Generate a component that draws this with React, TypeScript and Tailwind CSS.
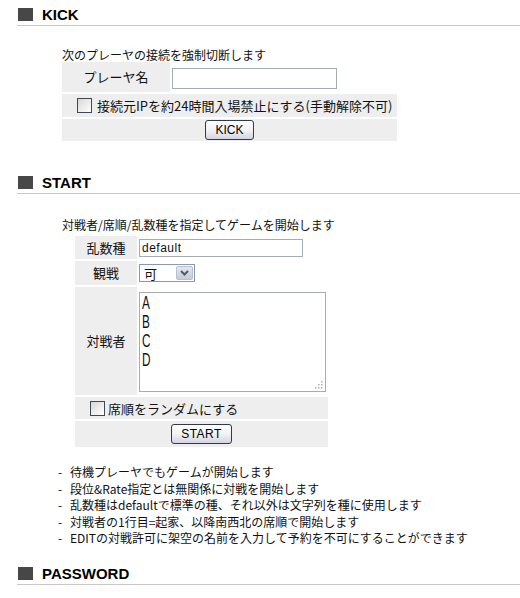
import React from 'react';

const jp = "font-['Noto_Sans_CJK_JP','Liberation_Sans',sans-serif]";

function SectionHeader({ title, className }: { title: string; className?: string }) {
  return (
    <div className={`ml-[17px] flex h-[22px] items-center border-b border-[#c8c8c8] ${className ?? ''}`}>
      <span className="ml-[1px] h-[13px] w-[15px] bg-[#474747]" />
      <span className="ml-[9px] font-['Liberation_Sans',sans-serif] text-[15px] font-bold leading-none text-black">
        {title}
      </span>
    </div>
  );
}

function Checkbox() {
  return (
    <span className="block h-[15px] w-[15px] shrink-0 border border-[#3a4a5e] bg-gradient-to-br from-[#d8d8d2] to-white" />
  );
}

function XpButton({ label, className }: { label: string; className?: string }) {
  return (
    <button
      className={`flex h-[20px] items-center justify-center rounded-[3px] border border-[#2f3a4a] bg-gradient-to-b from-white via-[#f2f2f6] to-[#d4d4e2] font-['Liberation_Sans',sans-serif] text-[12px] leading-none text-black ${className ?? ''}`}
    >
      {label}
    </button>
  );
}

export default function App() {
  return (
    <div className={`h-[598px] w-[520px] overflow-hidden bg-white pt-[4px] text-[12px] text-[#111] ${jp}`}>
      {/* KICK */}
      <SectionHeader title="KICK" />
      <p className="ml-[62px] mt-[22px] leading-[14px]">次のプレーヤの接続を強制切断します</p>
      <div className="ml-[62px] flex w-[335px] flex-col gap-[2px]">
        <div className="flex h-[30px] gap-[2px]">
          <div className="flex w-[108px] items-center justify-center bg-[#eeeeee] text-[13px]">プレーヤ名</div>
          <div className="flex-1 pt-[6px]">
            <div className="h-[21px] w-[165px] border border-[#a5acb2] bg-white" />
          </div>
        </div>
        <div className="flex h-[23px] items-center bg-[#eeeeee] pl-[15px]">
          <Checkbox />
          <span className="ml-[5px] text-[13px] leading-none">接続元IPを約24時間入場禁止にする(手動解除不可)</span>
        </div>
        <div className="flex h-[22px] items-center justify-center bg-[#eeeeee]">
          <XpButton label="KICK" className="w-[49px]" />
        </div>
      </div>

      {/* START */}
      <SectionHeader title="START" className="mt-[31px]" />
      <p className="ml-[62px] mt-[24px] leading-[14px]">対戦者/席順/乱数種を指定してゲームを開始します</p>
      <div className="ml-[75px] mt-[4px] flex w-[253px] flex-col gap-[2px]">
        <div className="flex h-[23px] gap-[2px]">
          <div className="flex w-[62px] items-center justify-center bg-[#eeeeee] text-[13px]">乱数種</div>
          <div className="flex flex-1 items-center">
            <div className="flex h-[18px] w-[164px] items-center border border-[#a5acb2] bg-white pl-[2px] font-['Liberation_Sans',sans-serif] text-[12px] tracking-[0.5px]">
              default
            </div>
          </div>
        </div>
        <div className="flex h-[24px] gap-[2px]">
          <div className="flex w-[62px] items-center justify-center bg-[#eeeeee] text-[13px]">観戦</div>
          <div className="flex flex-1 items-center">
            <div className="flex h-[18px] w-[56px] items-center border border-[#8a9aae] bg-white">
              <span className="flex-1 pl-[4px] text-[13px] leading-none">可</span>
              <span className="m-[1px] flex h-[14px] w-[17px] items-center justify-center rounded-[2px] border border-[#b8c0cc] bg-gradient-to-b from-[#e4e8ef] to-[#c4ccd8]">
                <svg width="9" height="6" viewBox="0 0 9 6">
                  <path d="M1 1l3.5 3.5L8 1" fill="none" stroke="#4d5a70" strokeWidth="2" />
                </svg>
              </span>
            </div>
          </div>
        </div>
        <div className="flex h-[108px] gap-[2px]">
          <div className="flex w-[62px] items-center justify-center bg-[#eeeeee] text-[13px]">対戦者</div>
          <div className="flex-1 pt-[5px]">
            <div className="relative h-[100px] w-[187px] border border-[#a5acb2] bg-white pl-[2px] pt-[0px]">
              {['A', 'B', 'C', 'D'].map((l) => (
                <div
                  key={l}
                  className="h-[19px] origin-left scale-x-[0.62] font-['Liberation_Sans',sans-serif] text-[19px] leading-[19px] text-[#111]"
                >
                  {l}
                </div>
              ))}
              <svg className="absolute bottom-[2px] right-[2px]" width="9" height="9" viewBox="0 0 9 9">
                <g fill="#b0b0b0">
                  <rect x="7" y="1" width="1.5" height="1.5" />
                  <rect x="4" y="4" width="1.5" height="1.5" />
                  <rect x="7" y="4" width="1.5" height="1.5" />
                  <rect x="1" y="7" width="1.5" height="1.5" />
                  <rect x="4" y="7" width="1.5" height="1.5" />
                  <rect x="7" y="7" width="1.5" height="1.5" />
                </g>
              </svg>
            </div>
          </div>
        </div>
        <div className="flex h-[22px] items-center bg-[#eeeeee] pl-[15px]">
          <Checkbox />
          <span className="ml-[3px] text-[13px] leading-none">席順をランダムにする</span>
        </div>
        <div className="flex h-[26px] items-center justify-center bg-[#eeeeee]">
          <XpButton label="START" className="w-[61px] tracking-[0.5px]" />
        </div>
      </div>

      <ul className="ml-[58px] mt-[17px] leading-[16.5px]">
        {[
          '待機プレーヤでもゲームが開始します',
          '段位&Rate指定とは無関係に対戦を開始します',
          '乱数種はdefaultで標準の種、それ以外は文字列を種に使用します',
          '対戦者の1行目=起家、以降南西北の席順で開始します',
          'EDITの対戦許可に架空の名前を入力して予約を不可にすることができます',
        ].map((t) => (
          <li key={t} className="flex">
            <span className="w-[12px]">-</span>
            <span>{t}</span>
          </li>
        ))}
      </ul>

      {/* PASSWORD */}
      <SectionHeader title="PASSWORD" className="mt-[16px]" />
    </div>
  );
}
